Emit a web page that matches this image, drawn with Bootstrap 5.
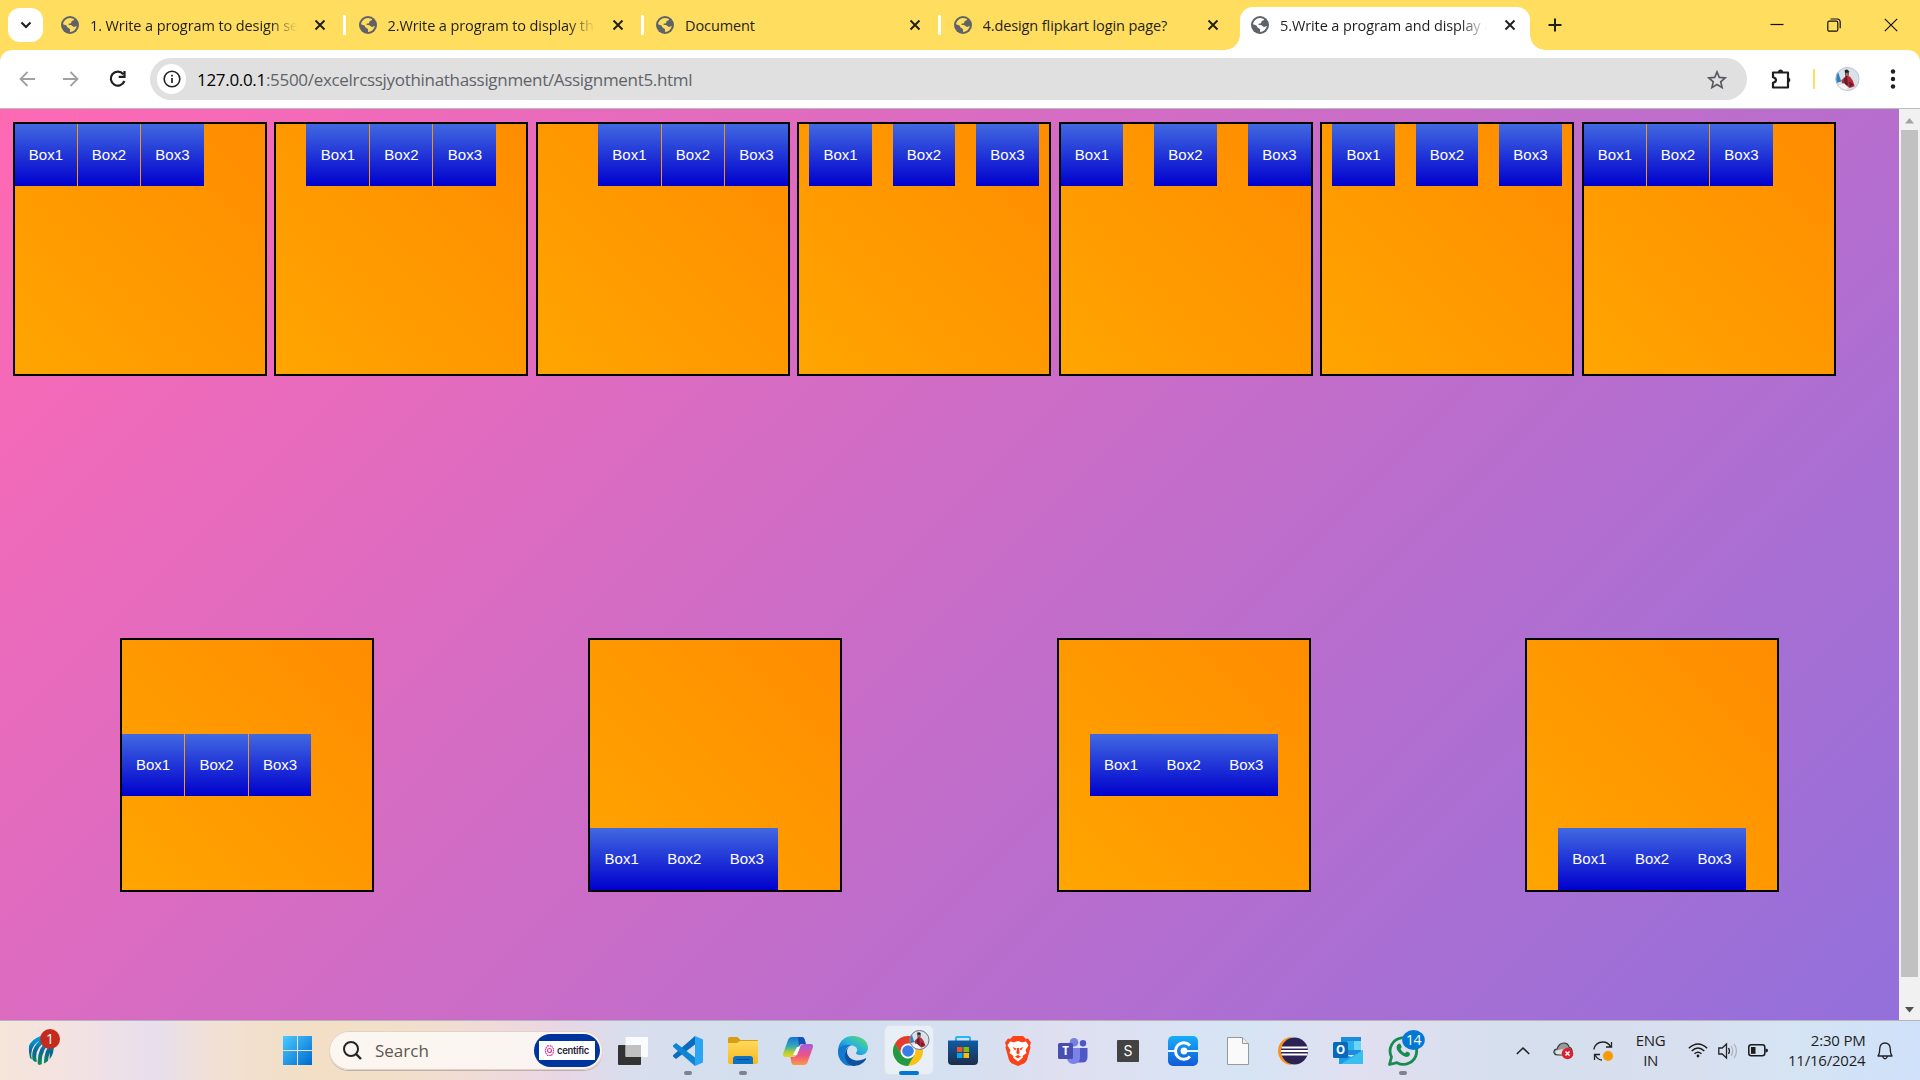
<!DOCTYPE html>
<html lang="en">
<head>
<meta charset="utf-8">
<title>5.Write a program and display all flex properties</title>
<link href="https://cdn.jsdelivr.net/npm/bootstrap@5.3.0/dist/css/bootstrap.min.css" rel="stylesheet">
<style>
body{width:1920px;height:1080px;overflow:hidden;font-family:"Open Sans","Noto Sans",sans-serif;color:#1f1f1f;line-height:1.2}
svg{display:block;overflow:visible;flex:none}
.tabstrip{height:50px;background:#ffdd5f;padding-left:8px}
.tabdrop{width:35px;height:34px;border-radius:12px}
.tabs-wrap{margin-left:2px}
.btab{width:297.5px;height:50px;padding-left:16px;font-size:14.5px;flex:none}
.btab>*{flex:none}
.btab .ttl{width:207px;margin-left:11px;white-space:nowrap;overflow:hidden;letter-spacing:-.1px;line-height:22px;padding-top:1px}
.btab .fade-end{-webkit-mask-image:linear-gradient(90deg,#000 180px,transparent 207px)}
.btab .cls{margin-left:17px}
.tabsep{width:3px;height:20px;background:#fff;margin-left:17px;border-radius:1px}
.btab.active{background:#fff;height:43px;width:290px;margin:7px 0 0 5px;padding:0 0 7px 11px;border-radius:13px 13px 0 0;position:relative}
.btab.active::before,.btab.active::after{content:"";position:absolute;bottom:0;width:15px;height:15px}
.btab.active::before{left:-15px;background:radial-gradient(circle at 0 0,transparent 14.5px,#fff 15px)}
.btab.active::after{right:-15px;background:radial-gradient(circle at 100% 0,transparent 14.5px,#fff 15px)}
.plus{margin-left:18px}
.winctl{padding-right:22px;gap:43px}
.toolbar-wrap{background:#ffdd5f}
.toolbar-in{height:58px;border-radius:12px 12px 0 0;padding-left:18px}
.nav-fwd{margin-left:26px}
.nav-reload{margin-left:29px}
.omni{width:1597px;height:42px;border-radius:21px;background:#e0e0e0;padding-left:7px;margin-left:23px}
.info{width:29px;height:30px;border-radius:15px}
.url{font-size:17px;letter-spacing:-.31px;margin-left:11px;color:#5f6368;line-height:24px;padding-top:1px}
.star{margin-right:20px}
.ext{margin-left:24px}
.bar-sep{width:2px;height:20px;background:#ffdd5f;margin-left:21px}
.avatar{margin-left:20px}
.kebab{margin-left:30px}
.viewport{height:912px;border-top:1px solid #bcbcbc}
.canvas{width:1899px;background:linear-gradient(135deg,#ff69b4,#9370db);padding:13px 12.85px 0 12.9px}
.flexbox{width:254px;height:254px;border:2px solid #000;background:linear-gradient(45deg,#ffa500,#ff8c00);flex:none}
.row-a{gap:7.5px;height:516px}
.cell{width:63px;height:62px;background:linear-gradient(#4169e1,#0000cd);color:#fff;font:15px/62px "Liberation Sans",Arial,sans-serif;text-align:center;flex:none}
.g1{gap:1px}
.n1>.cell:nth-child(1),.n2>.cell:nth-child(2),.n3>.cell:nth-child(3){width:62px}
.justify-content-around>.cell:first-child{margin-left:-.8px}
.joined>.cell{width:62.6px}
.sbar{width:21px;background:#f1f1f1}
.thumb{width:17px;height:847px;background:#c1c1c1}
.taskbar{height:59px;border-top:1px solid #b5b3bb;background:linear-gradient(90deg,#f5e5da 0,#f3e2e2 70px,#e7dfec 155px,#f2e0d4 215px,#f2dfc5 310px,#f2dfc8 390px,#efdbd8 490px,#e9d6e5 560px,#d8deed 625px,#d3dfee 760px,#d5e0f0 960px,#dfdff0 1060px,#d6e4f4 1240px,#e0dfef 1370px,#d5dfee 1510px,#d8dfef 1680px,#d5e4f3 1800px,#cfe0fa 1920px)}
.widget-slot{width:270px;padding:0 0 8px 27px}
.start-slot{width:54px}
.searchpill{width:274px;height:39px;margin-left:5px;border-radius:20px;background:linear-gradient(90deg,#fbf6ef,#fbf5f1 60%,#f8f1f6);box-shadow:0 0 0 1px #e3d1c5 inset,0 1px 0 #bdb0ac;padding:0 3px 0 14px;font-size:17px;color:#5c5852}
.searchpill span{margin-left:13px;padding-top:2px}
.centific{width:66px;height:33px;border-radius:17px;background:#00349d}
.centific>div{width:56px;height:19px;background:#fff;font:600 9.5px "Inter",sans-serif;color:#252536;letter-spacing:-.35px}
.centific svg{margin-right:3px}
.apps{margin-left:2.500px}
.app{width:55px;height:59px;position:relative}
.app.on::after{content:"";position:absolute;left:23px;bottom:5px;width:8px;height:4px;border-radius:2px;background:#7d828b}
.app.cur::before{content:"";position:absolute;left:4px;top:5px;width:48px;height:48px;border-radius:5px;background:#e9eff7;box-shadow:0 0 0 1px #dde3ed}
.app.cur::after{content:"";position:absolute;left:18px;bottom:5px;width:20px;height:4px;border-radius:2px;background:#0078d4}
.app.cur svg{position:relative}
.tray{margin-left:72px;font-size:15px}
.t40{width:40px}.t30{width:30px}
.lang{width:56px;line-height:20px;letter-spacing:-.4px}
.clock{width:93px;line-height:20px;letter-spacing:-.2px;white-space:nowrap}
.lang,.clock{padding-bottom:2px}
.bell{margin-left:11px}
</style>
<script src="https://cdn.jsdelivr.net/npm/bootstrap@5.3.0/dist/js/bootstrap.bundle.min.js"></script>
</head>
<body class="d-flex flex-column">
<svg width="0" height="0" class="position-absolute">
 <defs>
  <linearGradient id="win" x2="1" y2="1"><stop stop-color="#4bcbff"/><stop offset="1" stop-color="#0069cf"/></linearGradient>
  <linearGradient id="edg" x1="0" y1="1" x2="1" y2="0"><stop stop-color="#0b63b5"/><stop offset=".5" stop-color="#26b2e0"/><stop offset="1" stop-color="#60e060"/></linearGradient>
  <linearGradient id="cpA" x2="0" y2="1"><stop stop-color="#1774d8"/><stop offset=".45" stop-color="#32a7b8"/><stop offset=".75" stop-color="#a8cf3d"/><stop offset="1" stop-color="#f6cf26"/></linearGradient>
  <linearGradient id="cpB" x2="0" y2="1"><stop stop-color="#a45be2"/><stop offset=".55" stop-color="#ef5482"/><stop offset="1" stop-color="#fb9b45"/></linearGradient>
  <linearGradient id="fold" x2="0" y2="1"><stop stop-color="#ffda61"/><stop offset="1" stop-color="#f9b718"/></linearGradient>
  <linearGradient id="crick" gradientUnits="userSpaceOnUse" x1="0" y1="8" x2="0" y2="37"><stop stop-color="#00a6e6"/><stop offset=".55" stop-color="#096594"/><stop offset="1" stop-color="#09914b"/></linearGradient>
  <linearGradient id="cc" x2="0" y2="1"><stop stop-color="#16adf9"/><stop offset="1" stop-color="#105ad8"/></linearGradient>
  <symbol id="globe" viewBox="0 0 18 18"><circle cx="9" cy="9" r="9" fill="#5f6368"/><path d="M9 1.900c2 .1 3.200.6 4.100 1.400-.1 1.300-1.500 1.200-2.300 1.700-.8.6 0 1.700-1 2.200-.9.400-2.200-.1-2.500.9-.2.9 1 .9 2.200.9 1.900 0 2 1.900 3.600 1.900 1.200 0 1.500-.9 2.700-.8A7 7 0 0 1 9 16.100c-.3-1.300.5-2-.2-3.100-.6-1-2.300-.8-2.700-2.200-.2-1-.9-1.500-2.100-1.700L2 8.300C2.400 4.900 5.300 2 9 1.900Z" fill="#ffdd5f"/></symbol>
  <symbol id="globeW" viewBox="0 0 18 18"><circle cx="9" cy="9" r="9" fill="#5f6368"/><path d="M9 1.900c2 .1 3.200.6 4.100 1.400-.1 1.300-1.500 1.200-2.300 1.700-.8.6 0 1.700-1 2.200-.9.400-2.200-.1-2.500.9-.2.9 1 .9 2.200.9 1.900 0 2 1.900 3.600 1.900 1.200 0 1.500-.9 2.700-.8A7 7 0 0 1 9 16.100c-.3-1.300.5-2-.2-3.100-.6-1-2.300-.8-2.700-2.200-.2-1-.9-1.500-2.100-1.700L2 8.300C2.400 4.900 5.300 2 9 1.900Z" fill="#fff"/></symbol>
  <symbol id="xx" viewBox="0 0 12 12"><path d="M1.500 1.500l9 9m0-9l-9 9" stroke="#1f1f1f" stroke-width="1.900" fill="none"/></symbol>
  <symbol id="face" viewBox="0 0 25 25"><clipPath id="fc"><circle cx="12.500" cy="12.500" r="12.500"/></clipPath><g clip-path="url(#fc)"><path fill="#d9e1ea" d="M0 0h25v25H0z"/><path fill="#2c82bf" d="M0 5l3 1 3 9-6 2z"/><path fill="#b92c35" d="M6 14l5-5 4 1 3 4 2 6-5 2-8-5z"/><path fill="#612030" d="M9 12l3-2 1 9-4-1zM14 15l5 3-4 3z"/><path fill="#232330" d="M9.500 3.500q3-2 4.500 1l-.5 5-3 1z"/><path fill="#a96757" d="M10.500 6h3v3.500h-3z"/><path fill="#f4f4f5" d="M3 19l6-2 4 4-2 4H4z"/></g><circle cx="12.500" cy="12.500" r="12" fill="none" stroke="#b9c0c9" stroke-width=".8"/></symbol>
 </defs>
</svg>

<!-- Tab strip -->
<div class="tabstrip d-flex align-items-center">
 <div class="tabdrop bg-white d-flex align-items-center justify-content-center"><svg width="12" height="8" viewBox="0 0 12 8"><path d="M1.500 1.500L6 6l4.500-4.500" fill="none" stroke="#1f1f1f" stroke-width="2.100"/></svg></div>
 <div class="tabs-wrap d-flex">
  <div class="btab d-flex align-items-center"><svg width="18" height="18"><use href="#globe"/></svg><div class="ttl fade-end">1. Write a program to design sea</div><svg class="cls" width="12" height="12"><use href="#xx"/></svg><div class="tabsep"></div></div>
  <div class="btab d-flex align-items-center"><svg width="18" height="18"><use href="#globe"/></svg><div class="ttl fade-end">2.Write a program to display the</div><svg class="cls" width="12" height="12"><use href="#xx"/></svg><div class="tabsep"></div></div>
  <div class="btab d-flex align-items-center"><svg width="18" height="18"><use href="#globe"/></svg><div class="ttl">Document</div><svg class="cls" width="12" height="12"><use href="#xx"/></svg><div class="tabsep"></div></div>
  <div class="btab d-flex align-items-center"><svg width="18" height="18"><use href="#globe"/></svg><div class="ttl">4.design flipkart login page?</div><svg class="cls" width="12" height="12"><use href="#xx"/></svg></div>
  <div class="btab active d-flex align-items-center"><svg width="18" height="18"><use href="#globeW"/></svg><div class="ttl fade-end">5.Write a program and display a</div><svg class="cls" width="12" height="12"><use href="#xx"/></svg></div>
 </div>
 <svg class="plus" width="14" height="14" viewBox="0 0 14 14"><path d="M7 .5v13M.5 7h13" stroke="#1f1f1f" stroke-width="2"/></svg>
 <div class="winctl d-flex align-items-center ms-auto">
  <svg width="14" height="14" viewBox="0 0 14 14"><path d="M.5 6.500h13" stroke="#111" stroke-width="1.200"/></svg>
  <svg width="14" height="14" viewBox="0 0 14 14" fill="none" stroke="#111" stroke-width="1.200"><rect x=".8" y="3.200" width="10" height="10" rx="1.500"/><path d="M3.500 1h6.500q3.200 0 3.200 3.200v6"/></svg>
  <svg width="14" height="14" viewBox="0 0 14 14"><path d="M.8.8l12.400 12.400m0-12.400L.8 13.200" stroke="#111" stroke-width="1.200"/></svg>
 </div>
</div>

<!-- Toolbar -->
<div class="toolbar-wrap"><div class="toolbar-in bg-white d-flex align-items-center">
 <svg width="18" height="18" viewBox="0 0 18 18" fill="none" stroke="#a1a1a1" stroke-width="1.800"><path d="M17 9H3M9.500 2L2.500 9l7 7"/></svg>
 <svg class="nav-fwd" width="18" height="18" viewBox="0 0 18 18" fill="none" stroke="#a1a1a1" stroke-width="1.800"><path d="M1 9h14M8.500 2l7 7-7 7"/></svg>
 <svg class="nav-reload" width="18" height="18" viewBox="0 0 18 18" fill="none" stroke="#1f1f1f" stroke-width="2.200"><path d="M14.300 4.200A7 7 0 1 0 15.400 11M15.500 1v5.800H9.700"/></svg>
 <div class="omni d-flex align-items-center">
  <div class="info bg-white d-flex align-items-center justify-content-center"><svg width="18" height="18" viewBox="0 0 18 18"><circle cx="9" cy="9" r="7.800" fill="none" stroke="#222" stroke-width="1.600"/><path d="M9 8v5M9 4.700v1.800" stroke="#222" stroke-width="1.700"/></svg></div>
  <div class="url"><span class="text-black">127.0.0.1</span>:5500/excelrcssjyothinathassignment/Assignment5.html</div>
  <svg class="ms-auto star" width="20" height="19" viewBox="0 0 20 19"><path d="M10 1.900l2.300 5.500 5.900.5-4.500 3.900 1.400 5.800-5.100-3.100-5.100 3.100 1.400-5.800-4.500-3.900 5.900-.5z" fill="none" stroke="#55585c" stroke-width="1.600"/></svg>
 </div>
 <svg class="ext" width="21" height="21" viewBox="0 0 21 21"><path d="M2 3.500h15v15H2v-4.800q3-.7 3-2.700T2 8.300z" fill="none" stroke="#1f1f1f" stroke-width="2.200" stroke-linejoin="round"/><path d="M7 3a2.500 2.500 0 0 1 5 0zM17.500 8.500a2.600 2.600 0 0 1 0 5z" fill="#1f1f1f"/></svg>
 <div class="bar-sep"></div>
 <svg class="avatar" width="25" height="24"><use href="#face"/></svg>
 <svg class="kebab" width="6" height="20" viewBox="0 0 6 20" fill="#1f1f1f"><circle cx="3" cy="2.500" r="2.200"/><circle cx="3" cy="10" r="2.200"/><circle cx="3" cy="17.500" r="2.200"/></svg>
</div></div>

<!-- Page viewport -->
<div class="viewport d-flex">
 <main class="canvas">
  <div class="row-a d-flex">
   <div class="flexbox d-flex g1 n1 n2"><div class="cell">Box1</div><div class="cell">Box2</div><div class="cell">Box3</div></div>
   <div class="flexbox d-flex g1 n2 justify-content-center"><div class="cell">Box1</div><div class="cell">Box2</div><div class="cell">Box3</div></div>
   <div class="flexbox d-flex g1 n2 justify-content-end"><div class="cell">Box1</div><div class="cell">Box2</div><div class="cell">Box3</div></div>
   <div class="flexbox d-flex n2 justify-content-around"><div class="cell">Box1</div><div class="cell">Box2</div><div class="cell">Box3</div></div>
   <div class="flexbox d-flex n1 justify-content-between"><div class="cell">Box1</div><div class="cell">Box2</div><div class="cell">Box3</div></div>
   <div class="flexbox d-flex n2 justify-content-around"><div class="cell">Box1</div><div class="cell">Box2</div><div class="cell">Box3</div></div>
   <div class="flexbox d-flex g1 n1 n2"><div class="cell">Box1</div><div class="cell">Box2</div><div class="cell">Box3</div></div>
  </div>
  <div class="d-flex justify-content-around">
   <div class="flexbox d-flex g1 n1 n3 align-items-center"><div class="cell">Box1</div><div class="cell">Box2</div><div class="cell">Box3</div></div>
   <div class="flexbox d-flex joined align-items-end"><div class="cell">Box1</div><div class="cell">Box2</div><div class="cell">Box3</div></div>
   <div class="flexbox d-flex joined align-items-center justify-content-center"><div class="cell">Box1</div><div class="cell">Box2</div><div class="cell">Box3</div></div>
   <div class="flexbox d-flex joined align-items-end justify-content-center"><div class="cell">Box1</div><div class="cell">Box2</div><div class="cell">Box3</div></div>
  </div>
 </main>
 <div class="sbar d-flex flex-column align-items-center">
  <svg width="21" height="21" viewBox="0 0 21 21"><path d="M6 14.500L10.500 9l4.500 5.500z" fill="#a3a3a3"/></svg>
  <div class="thumb"></div>
  <svg class="mt-auto" width="21" height="21" viewBox="0 0 21 21"><path d="M6 8l4.500 5.500L15 8z" fill="#505050"/></svg>
 </div>
</div>

<!-- Taskbar -->
<footer class="taskbar d-flex align-items-center flex-grow-1">
 <div class="widget-slot"><svg width="34" height="38" viewBox="0 0 34 38"><clipPath id="ball"><path d="M3 30Q-1 12 9 10Q20 3 27 17Q27 34 12 37z"/></clipPath><g clip-path="url(#ball)" fill="none" stroke="url(#crick)" stroke-width="4"><path d="M3 32Q-1 15 16 9M8 34Q4 19 20 10M13 38Q11 22 23 12M19 38Q18 25 26 15M25 36Q24 26 25.500 15"/></g><circle cx="23" cy="11" r="10" fill="#c42b1c"/><text x="23" y="16" font-size="14" fill="#fff" text-anchor="middle">1</text></svg></div>
 <div class="start-slot d-flex justify-content-center"><svg width="29" height="29" viewBox="0 0 29 29"><g fill="url(#win)"><path d="M0 0h14v14H0zM15 0h14v14H15zM0 15h14v14H0zM15 15h14v14H15z"/></g></svg></div>
 <div class="searchpill d-flex align-items-center"><svg width="19" height="19" viewBox="0 0 19 19" fill="none" stroke="#252525" stroke-width="2"><circle cx="8" cy="8" r="7"/><path d="M13 13l5 5" stroke-width="2.400"/></svg><span>Search</span>
  <div class="centific ms-auto d-flex align-items-center justify-content-center"><div class="d-flex align-items-center justify-content-center"><svg width="9" height="11" viewBox="0 0 9 11"><g fill="none" stroke="#de3d99" stroke-width="1.200"><path d="M2.500.8h4l2 3v3.500l-2 3h-4l-2-3V3.800z" stroke-dasharray="1.600 .6"/><circle cx="4.500" cy="5.500" r="2"/></g></svg>centific</div></div>
 </div>
 <div class="apps d-flex">
  <div class="app d-flex align-items-center justify-content-center"><svg width="30" height="28" viewBox="0 0 30 28"><rect y="8" width="23" height="20" rx="1" fill="#333"/><rect x="7.500" y="0" width="22.500" height="20" rx="1" fill="#fff" fill-opacity=".86"/><path d="M7.500 8H23v12H7.500z" fill="#b5b5b5" opacity=".75"/></svg></div>
  <div class="app on d-flex align-items-center justify-content-center"><svg width="30" height="30" viewBox="0 0 30 30"><path d="M22 0l8 3.500v23L22 30z" fill="#2aa4f4"/><path d="M22 0v8.500L3 23 0 20.500v-1.300z" fill="#0a6cbd"/><path d="M22 30v-8.500L3 7 0 9.500v1.300z" fill="#0c85d5"/></svg></div>
  <div class="app on d-flex align-items-center justify-content-center"><svg width="30" height="27" viewBox="0 0 30 27"><path d="M0 1.500Q0 0 1.500 0h8l3 3H29q1 0 1 1v5H0z" fill="#dc9c12"/><path d="M0 6h9l3-2h18v21q0 2-2 2H2q-2 0-2-2z" fill="url(#fold)"/><path d="M5 27v-5q0-3 3-3h14q3 0 3 3v5z" fill="#0c72c5"/><path d="M8.500 22.500h13" stroke="#064982"/></svg></div>
  <div class="app d-flex align-items-center justify-content-center"><svg width="30" height="28" viewBox="0 0 30 28"><path d="M9 0h10q2 0 2.700 2.500L22.500 6H20q-3 0-4 3l-3 8q-1 3-4 3H2.500q-3.500 0-2.200-4L5 3Q6 0 9 0z" fill="url(#cpA)"/><path d="M21 28H11q-2 0-2.700-2.500L7.500 20H10q3 0 4-3l3-7q1-3 4-3h6.500q3.500 0 2.200 4L25 24q-1 4-4 4z" fill="url(#cpB)"/><path d="M15 0h4q2 0 2.700 2.500L23 7h-4q-2 0-3 2z" fill="#164fb6"/><path d="M14 10h3l-3 8h-4z" fill="#fff"/></svg></div>
  <div class="app d-flex align-items-center justify-content-center"><svg width="30" height="30" viewBox="0 0 30 30"><path d="M0 16C0 6 6 0 15 0c8 0 15 5 15 11.500 0 5-3.500 7.500-7.500 7.500-3 0-4.500-1-4.500-2 0-.7 1.200-1.200 1.200-3 0-3-3-4.500-6.200-4.500C7 9.500 1 12 0 16z" fill="url(#edg)"/><path d="M0 15C1 10 7 8 13 9.500c-4 1-5.500 4-5.500 7.500 0 6 5 10 11 10-4 3-8 3-10 2.200C4 27.500-.5 22 0 15z" fill="#1378cf"/><path d="M13 9.500C6 13 9 22 16 24c5 1.500 9-.5 11-1.500.7-.4 1.300.2.900 1C25 28 20 30 15 30c-5-1-8-6-8-11 0-5 3-8.500 6-9.500z" fill="#0d519e"/></svg></div>
  <div class="app cur d-flex align-items-center justify-content-center"><svg width="30" height="30" viewBox="0 0 30 30"><circle cx="15" cy="15" r="15" fill="#fbc116"/><path d="M2 7.500A15 15 0 0 1 28 7.500H15L8.500 18.750z" fill="#e33b2e"/><path d="M2 7.500L8.500 18.750Q11 23 15 22.500L21.500 18.750 15 30A15 15 0 0 1 2 7.500z" fill="#219a45"/><circle cx="15" cy="15" r="7.500" fill="#fff"/><circle cx="15" cy="15" r="5.800" fill="#3b7de8"/><g transform="translate(16.500 -6)"><use href="#face" width="20" height="20"/><circle cx="10" cy="10" r="9.500" fill="none" stroke="#777e89"/></g></svg></div>
  <div class="app d-flex align-items-center justify-content-center"><svg width="30" height="29" viewBox="0 0 30 29"><defs><linearGradient id="sto" x2="0" y2="1"><stop stop-color="#0f5ca5"/><stop offset="1" stop-color="#1c2d4b"/></linearGradient></defs><path d="M8 5V2q0-1 1-1h12q1 0 1 1v3" fill="none" stroke="#29b6f0" stroke-width="2"/><path d="M0 4.500h30V25q0 4-4 4H4q-4 0-4-4z" fill="url(#sto)"/><path fill="#f35325" d="M9 11h5.500v5H9z"/><path fill="#81bc06" d="M15.500 11H21v5h-5.500z"/><path fill="#05a6f0" d="M9 17h5.500v5H9z"/><path fill="#ffba08" d="M15.500 17H21v5h-5.500z"/></svg></div>
  <div class="app d-flex align-items-center justify-content-center"><svg width="26" height="30" viewBox="0 0 26 30"><path d="M8 0h10l3 3 2-.5 3 4-1 3 .5 2L22 24q-1 2-3 3.500L13 30l-6-2.500Q5 26 4 24L.5 11.500 1 9.500 0 6.500l3-4 2 .5z" fill="#fb4218"/><path d="M5 5.500l4 .8 4-1.300 4 1.300 4-.8 2.500 4-3 4.500 1 3-4 3 .5 1.500-5 4-5-4 .5-1.500-4-3 1-3-3-4.500z" fill="#fff"/><path d="M7.500 11l4 1.500-1.500 2zM18.500 11l-4 1.500 1.500 2zM12 12h2l.7 5-1.700 1.500-1.700-1.500zM10 20.500l3-1.500 3 1.500-3 2z" fill="#fb4218"/></svg></div>
  <div class="app d-flex align-items-center justify-content-center"><svg width="30" height="26" viewBox="0 0 30 26"><circle cx="16" cy="4.300" r="4.300" fill="#7880df"/><circle cx="25" cy="5.300" r="3.200" fill="#4d57c3"/><path d="M21 10h8.500v9q0 6-6 5.500h-4z" fill="#4f58c5"/><path d="M9 10h13v9q0 7-6.500 7T9 19z" fill="#7b83eb"/><rect y="5" width="15" height="16" rx="1.500" fill="#484fb1"/><text x="7.500" y="17" font-size="11.500" font-weight="700" fill="#fff" text-anchor="middle">T</text></svg></div>
  <div class="app d-flex align-items-center justify-content-center"><svg width="22" height="22" viewBox="0 0 22 22"><rect width="22" height="22" rx="1" fill="#434343"/><text x="11" y="16" font-size="14" font-family="Inter" fill="#fff" text-anchor="middle">S</text></svg></div>
  <div class="app d-flex align-items-center justify-content-center"><svg width="30" height="30" viewBox="0 0 30 30"><rect width="30" height="30" rx="5" fill="url(#cc)"/><path d="M0 15h8m8 0h14" stroke="#e9f5ff" stroke-width="2"/><path d="M22 9.500a8.300 8.300 0 1 0 0 11" fill="none" stroke="#fff" stroke-width="3"/><circle cx="16" cy="15" r="3.400" fill="#fff"/></svg></div>
  <div class="app d-flex align-items-center justify-content-center"><svg width="22" height="28" viewBox="0 0 22 28"><path d="M.5.5h15l6 6v21H.5z" fill="#fafafa" stroke="#989898"/><path d="M15.500.5v6h6" fill="#ececec" stroke="#989898"/></svg></div>
  <div class="app d-flex align-items-center justify-content-center"><svg width="30" height="28" viewBox="0 0 30 28"><path d="M14 0A14 14 0 0 0 14 28Q4 23 4 14T14 0z" fill="#f8941e"/><circle cx="16.500" cy="14" r="13.500" fill="#2c2255"/><path d="M3.500 10.500h26M3 14h27M3.500 17.500h26" stroke="#fff" stroke-width="1.900"/></svg></div>
  <div class="app d-flex align-items-center justify-content-center"><svg width="30" height="27" viewBox="0 0 30 27"><path d="M8 0h20v18H8z" fill="#1d8bdd"/><path d="M14 4h7v9h-7z" fill="#2eb0ed"/><path d="M21 4h7v9h-7z" fill="#69d5f7"/><path d="M6 14l12 6 12-7v14H6z" fill="#1b9de7"/><path d="M8 27l22-14v14z" fill="#38bfef"/><rect y="5" width="15" height="16" rx="1.500" fill="#0869bb"/><text x="7.500" y="17" font-size="11.500" font-weight="700" fill="#fff" text-anchor="middle">O</text></svg></div>
  <div class="app on d-flex align-items-center justify-content-center"><svg width="30" height="30" viewBox="0 0 30 30"><path d="M1.500 28.500l2-7.500A13.300 13.300 0 1 1 9 26.700z" fill="none" stroke="#178b50" stroke-width="2.800" stroke-linejoin="round"/><path d="M10 8q2-1.500 3 1l.7 2-1.200 2q1.500 3 4.500 4.200l1.700-1.700 3 1.300q1 3-2.200 4-3.500.7-8.300-4T10 8z" fill="#178b50"/><ellipse cx="25.500" cy="4" rx="11.300" ry="10" fill="#0078d4"/><text x="25.500" y="9" font-size="14" fill="#fff" text-anchor="middle" letter-spacing="-.5">14</text></svg></div>
 </div>
 <div class="tray d-flex align-items-center">
  <div class="t40 d-flex justify-content-center"><svg width="14" height="8" viewBox="0 0 14 8"><path d="M.8 7L7 1l6.200 6" fill="none" stroke="#222" stroke-width="1.600"/></svg></div>
  <div class="t40 d-flex justify-content-center"><svg width="20" height="17" viewBox="0 0 20 17"><path d="M5 13q-5-.5-4-4 .5-2 3-2Q6 1 11 1q4 0 5 4 3 1 3 4L11 13z" fill="#999" stroke="#333" stroke-width="1.100"/><path d="M3 12q-2-4 3-4l8-2 2 7z" fill="#e1e1e1"/><circle cx="14.500" cy="11.500" r="5.800" fill="#d92332"/><path d="M12.500 9.500l4 4m0-4l-4 4" stroke="#fff" stroke-width="1.500"/></svg></div>
  <div class="t40 d-flex justify-content-center"><svg width="20" height="20" viewBox="0 0 20 20"><path d="M.8 8.500Q2.500 1 10 1q5 0 8 5M18.500 1v5H13M1.500 19v-5.500H7M2 14q3 5 7 5" fill="none" stroke="#222" stroke-width="1.300"/><circle cx="15" cy="15" r="5" fill="#fb9904"/></svg></div>
  <div class="lang text-center">ENG<br>IN</div>
  <div class="t30 ms-1 d-flex justify-content-center"><svg width="20" height="15" viewBox="0 0 20 15" fill="none" stroke="#1b1b1b" stroke-width="1.400"><path d="M.8 5.200Q10-3.400 19.200 5.200M3.700 8Q10 2 16.300 8M6.500 10.800q3.500-3.200 7 0"/><circle cx="10" cy="13" r="1.400" fill="#1b1b1b" stroke="none"/></svg></div>
  <div class="t30 d-flex justify-content-center"><svg width="20" height="16" viewBox="0 0 20 16" fill="none" stroke="#222" stroke-width="1.300"><path d="M.8 5h3.400L8.500 1v14l-4.300-4H.8zM10.500 5q2 3 0 6"/><path d="M13 3q3.500 5 0 10M16 .8q5 7.200 0 14.400" stroke="#aeb5c1"/></svg></div>
  <div class="t30 d-flex justify-content-center"><svg width="20" height="13" viewBox="0 0 20 13"><rect x=".8" y=".8" width="16" height="11" rx="2.500" fill="none" stroke="#1b1b1b" stroke-width="1.500"/><rect x="3" y="3" width="4.500" height="6.800" fill="#1b1b1b"/><path d="M17.500 4.500q2.500 0 2.500 2t-2.500 2z" fill="#1b1b1b"/></svg></div>
  <div class="clock text-end">2:30 PM<br>11/16/2024</div>
  <svg class="bell" width="16" height="18" viewBox="0 0 16 18"><path d="M1 14q1.700-2 1.700-7Q3 1 8 1t5.300 6q0 5 1.700 7zM5.500 14.500q2.500 4.500 5 0" fill="none" stroke="#222" stroke-width="1.300" stroke-linejoin="round"/></svg>
 </div>
</footer>
</body>
</html>
